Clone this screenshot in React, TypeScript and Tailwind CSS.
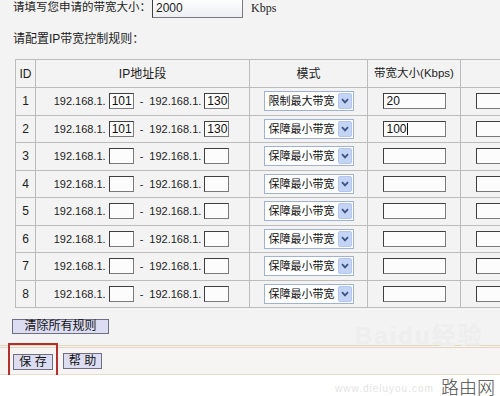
import React from 'react';

// Font stacks: Latin in Liberation Sans, CJK falls back to Noto Sans CJK SC
const sans = "font-['Liberation_Sans','Noto_Sans_CJK_SC',sans-serif]";

type Rule = {
  id: number;
  from: string;
  to: string;
  mode: string;
  bw: string;
  cursor?: boolean;
};

const rules: Rule[] = [
  { id: 1, from: '101', to: '130', mode: '限制最大带宽', bw: '20' },
  { id: 2, from: '101', to: '130', mode: '保障最小带宽', bw: '100', cursor: true },
  { id: 3, from: '', to: '', mode: '保障最小带宽', bw: '' },
  { id: 4, from: '', to: '', mode: '保障最小带宽', bw: '' },
  { id: 5, from: '', to: '', mode: '保障最小带宽', bw: '' },
  { id: 6, from: '', to: '', mode: '保障最小带宽', bw: '' },
  { id: 7, from: '', to: '', mode: '保障最小带宽', bw: '' },
  { id: 8, from: '', to: '', mode: '保障最小带宽', bw: '' },
];

const boxBorder =
  'border border-[#7a7a7a] border-t-[#3f3f3f] border-l-[#3f3f3f] bg-[#fcfcfc]';

const SmallBox: React.FC<{ value: string }> = ({ value }) => (
  <div className={`w-[25px] h-[16px] ${boxBorder} text-[12px] leading-[14px] pl-[2px] text-[#111]`}>
    {value}
  </div>
);

const ModeSelect: React.FC<{ value: string }> = ({ value }) => (
  <div className="mx-auto w-[90px] h-[20px] border border-[#9fb3cf] bg-white flex items-center">
    <span className="pl-[4px] text-[11px] leading-[14px] text-[#111] whitespace-nowrap">{value}</span>
    <div className="ml-auto mr-[1px] w-[14px] h-[16px] rounded-[2px] bg-[#c4d4f5] border border-[#b3c6ec] flex items-center justify-center">
      <svg width="8" height="6" viewBox="0 0 8 6">
        <path d="M1 1.2 L4 4.4 L7 1.2" stroke="#3d5486" strokeWidth="1.8" fill="none" />
      </svg>
    </div>
  </div>
);

const BwBox: React.FC<{ value: string; cursor?: boolean }> = ({ value, cursor }) => (
  <div className={`w-[63px] h-[16px] ${boxBorder} flex items-center pl-[3px] text-[12px] leading-[14px] text-[#111]`}>
    {value}
    {cursor && <span className="inline-block w-px h-[12px] bg-[#111]" />}
  </div>
);

const td = 'border border-[#bcbcbc] h-[27.5px] p-0';

export default function App() {
  return (
    <div className={`w-[500px] h-[396px] overflow-hidden bg-white ${sans} text-[#1c1c1c]`}>
      <div className="bg-[#f3f3f3] pl-[13px] pb-[8px]">
        {/* 申请带宽 */}
        <div className="-mt-[2px] h-[20px] flex items-center">
          <span className="text-[11.5px] w-[139px] whitespace-nowrap">请填写您申请的带宽大小：</span>
          <div className={`w-[91px] h-[20px] ${boxBorder} bg-gradient-to-b from-white to-[#eceef4] text-[12px] leading-[18px] pl-[3px]`}>
            2000
          </div>
          <span className="ml-[8px] text-[12px] font-['Liberation_Serif',serif]">Kbps</span>
        </div>

        <div className="mt-[13px] h-[16px] leading-[16px] text-[12px] whitespace-nowrap">请配置IP带宽控制规则：</div>

        {/* 规则表 */}
        <table className="mt-[12px] ml-[2px] w-[525px] table-fixed border-collapse text-[12px]">
          <colgroup>
            <col className="w-[20px]" />
            <col className="w-[214px]" />
            <col className="w-[118px]" />
            <col className="w-[93px]" />
            <col className="w-[80px]" />
          </colgroup>
          <thead>
            <tr>
              <th className={`${td} h-[28px] font-normal text-center`}>ID</th>
              <th className={`${td} h-[28px] font-normal text-center`}>IP地址段</th>
              <th className={`${td} h-[28px] font-normal text-center`}>模式</th>
              <th className={`${td} h-[28px] font-normal text-center whitespace-nowrap text-[11.5px]`}>带宽大小(Kbps)</th>
              <th className={`${td} h-[28px]`} />
            </tr>
          </thead>
          <tbody>
            {rules.map((r) => (
              <tr key={r.id}>
                <td className={`${td} text-center`}>{r.id}</td>
                <td className={td}>
                  <div className="flex items-center justify-center text-[11px] pr-[2px]">
                    <span>192.168.1.</span>
                    <div className="ml-[3px]"><SmallBox value={r.from} /></div>
                    <span className="px-[6px]">-</span>
                    <span>192.168.1.</span>
                    <div className="ml-[3px]"><SmallBox value={r.to} /></div>
                  </div>
                </td>
                <td className={td}>
                  <ModeSelect value={r.mode} />
                </td>
                <td className={td}>
                  <div className="flex justify-center">
                    <BwBox value={r.bw} cursor={r.cursor} />
                  </div>
                </td>
                <td className={`${td} pl-[15px]`}>
                  <BwBox value="" />
                </td>
              </tr>
            ))}
          </tbody>
        </table>

        <button className="mt-[11px] -ml-px w-[97px] h-[15px] bg-[#dcdcf2] border border-[#6e6e80] text-[12px] leading-[13px] text-[#111]">
          清除所有规则
        </button>
      </div>

      {/* 底部按钮栏 */}
      <div className="relative h-[30px] bg-[#f6f5f3] border-t-[3px] border-double border-t-[#e2d6bf] border-b border-b-[#e6dcc8] flex items-center pl-[8px]">
        <div className="border-2 border-[#b3312c] px-[3px] py-[4px]">
          <button className="w-[40px] h-[16px] bg-[#dcdcf2] border border-[#6e6e80] text-[12px] leading-[14px] text-[#111]">
            保&nbsp;存
          </button>
        </div>
        <button className="ml-[5px] w-[39px] h-[16px] bg-[#dcdcf2] border border-[#6e6e80] text-[12px] leading-[14px] text-[#111]">
          帮&nbsp;助
        </button>

        {/* 水印 */}
        <div className="absolute left-[355px] -top-[24px] text-[24px] leading-[24px] text-[#eeeeee] font-bold tracking-[2px] select-none">
          Baidu经验
        </div>
      </div>

      <div className="relative h-[25px] bg-white">
        <div className="absolute left-[335px] top-[8px] text-[10px] leading-[12px] text-[#e4e4e4] tracking-[1px]">www.dieluyou.com</div>
        <div className="absolute left-[441px] top-[1px] text-[18px] leading-[20px] text-[#4a4a4a] font-['Noto_Sans_CJK_SC',sans-serif] font-light">
          路由网
        </div>
      </div>
    </div>
  );
}
